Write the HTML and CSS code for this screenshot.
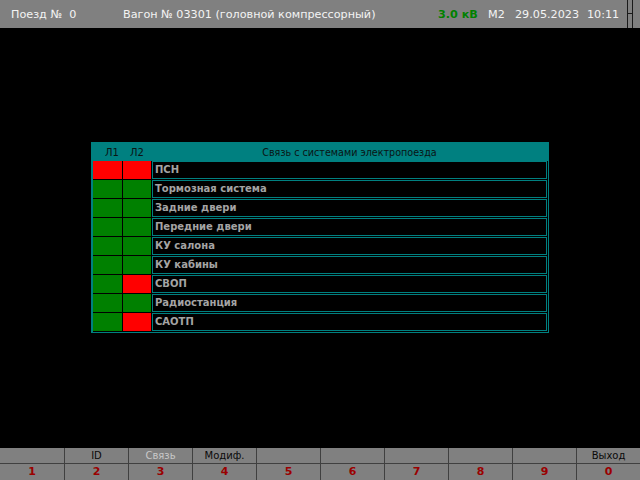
FILE: index.html
```html
<!DOCTYPE html>
<html lang="ru">
<head>
<meta charset="utf-8">
<title>Связь с системами электропоезда</title>
<link rel="stylesheet" href="styles.css">
</head>
<body>
<div class="screen">
  <header class="topbar">
    <span class="f f1">Поезд №  0</span>
    <span class="f f2">Вагон № 03301 (головной компрессорный)</span>
    <span class="f f3">3.0 кВ</span>
    <span class="f f4">М2</span>
    <span class="f f5">29.05.2023</span>
    <span class="f f6">10:11</span>
    <span class="corner"><span class="corner-l"></span><span class="corner-r"></span></span>
  </header>
  <main class="main">
    <section class="panel">
      <div class="head">
        <span class="h1">Л1</span>
        <span class="h2">Л2</span>
        <span class="htitle">Связь с системами электропоезда</span>
      </div>
      <div class="rows">
        <div class="row"><span class="st red"></span><span class="st red"></span><span class="name">ПСН</span></div>
        <div class="row"><span class="st green"></span><span class="st green"></span><span class="name">Тормозная система</span></div>
        <div class="row"><span class="st green"></span><span class="st green"></span><span class="name">Задние двери</span></div>
        <div class="row"><span class="st green"></span><span class="st green"></span><span class="name">Передние двери</span></div>
        <div class="row"><span class="st green"></span><span class="st green"></span><span class="name">КУ салона</span></div>
        <div class="row"><span class="st green"></span><span class="st green"></span><span class="name">КУ кабины</span></div>
        <div class="row"><span class="st green"></span><span class="st red"></span><span class="name">СВОП</span></div>
        <div class="row"><span class="st green"></span><span class="st green"></span><span class="name">Радиостанция</span></div>
        <div class="row"><span class="st green"></span><span class="st red"></span><span class="name">САОТП</span></div>
      </div>
    </section>
  </main>
  <footer class="keys">
    <div class="key"><span class="lbl"></span><span class="num">1</span></div>
    <div class="key"><span class="lbl">ID</span><span class="num">2</span></div>
    <div class="key"><span class="lbl dim">Связь</span><span class="num">3</span></div>
    <div class="key"><span class="lbl">Модиф.</span><span class="num">4</span></div>
    <div class="key"><span class="lbl"></span><span class="num">5</span></div>
    <div class="key"><span class="lbl"></span><span class="num">6</span></div>
    <div class="key"><span class="lbl"></span><span class="num">7</span></div>
    <div class="key"><span class="lbl"></span><span class="num">8</span></div>
    <div class="key"><span class="lbl"></span><span class="num">9</span></div>
    <div class="key"><span class="lbl">Выход</span><span class="num">0</span></div>
  </footer>
</div>
</body>
</html>
```

FILE: styles.css
```css
* { box-sizing: border-box; }
html, body {
  margin: 0;
  padding: 0;
  background: #000;
}
body {
  width: 640px;
  height: 480px;
  overflow: hidden;
  font-family: "DejaVu Sans", Verdana, sans-serif;
}
.screen {
  display: flex;
  flex-direction: column;
  width: 640px;
  height: 480px;
}

/* top bar */
.topbar {
  position: relative;
  height: 28px;
  background: #808080;
  display: flex;
  align-items: center;
  padding-left: 11px;
  color: #f4f4f4;
  font-size: 11.2px;
  white-space: pre;
}
.f { flex: none; }
.f1 { width: 112px; }
.f2 { width: 315px; }
.f3 { width: 50px; color: #008000; font-weight: bold; }
.f4 { width: 27px; }
.f5 { width: 72px; }
.f6 { width: 40px; }
.corner {
  position: absolute;
  left: 627px;
  top: 0;
  width: 7px;
  height: 28px;
}
.corner-l {
  position: absolute;
  left: 0;
  top: 0;
  width: 1px;
  height: 28px;
  background: #1a1a1a;
}
.corner-r {
  position: absolute;
  left: 5px;
  top: 0;
  width: 1px;
  height: 28px;
  background: #1a1a1a;
}
.corner::after {
  content: "";
  position: absolute;
  left: 1px;
  top: 13px;
  width: 4px;
  height: 1px;
  background: #1a1a1a;
}

/* main */
.main {
  flex: 1;
  padding: 114px 0 0 91px;
}
.panel {
  width: 458px;
  border: 1px solid #008080;
  border-left-width: 2px;
  background: #000;
  padding: 0 1px 1px 0;
}
.head {
  height: 18px;
  margin-right: -1px;
  background: #008080;
  display: grid;
  grid-template-columns: 30px 29px 1fr;
  align-items: center;
  font-size: 9.6px;
  color: #0a1414;
  white-space: nowrap;
}
.h1 { padding-left: 12px; font-size: 10px; }
.h2 { padding-left: 7px; font-size: 10px; }
.htitle { text-align: center; padding-right: 1px; }
.rows {
  display: flex;
  flex-direction: column;
  gap: 1px;
}
.row {
  height: 18px;
  display: grid;
  grid-template-columns: 29px 28px 1fr;
  gap: 1px;
}
.st { display: block; }
.red { background: #ff0000; }
.green { background: #008000; }
.name {
  border: 1px solid #008080;
  background: #000;
  color: #a4a4a4;
  font-weight: bold;
  font-size: 10px;
  line-height: 16px;
  padding-left: 2px;
  white-space: nowrap;
}

/* function keys */
.keys {
  height: 32px;
  background: #808080;
  display: grid;
  grid-template-columns: repeat(10, 64px);
}
.key {
  display: flex;
  flex-direction: column;
  border-left: 1px solid #404040;
}
.key:first-child { border-left: none; }
.lbl {
  height: 16px;
  border-bottom: 1px solid #404040;
  text-align: center;
  font-size: 10px;
  line-height: 15px;
  color: #0a0a0a;
  white-space: nowrap;
}
.lbl.dim { color: #c8c8c8; }
.num {
  height: 16px;
  text-align: center;
  font-size: 11px;
  font-weight: bold;
  line-height: 16px;
  color: #9a0000;
}
```
